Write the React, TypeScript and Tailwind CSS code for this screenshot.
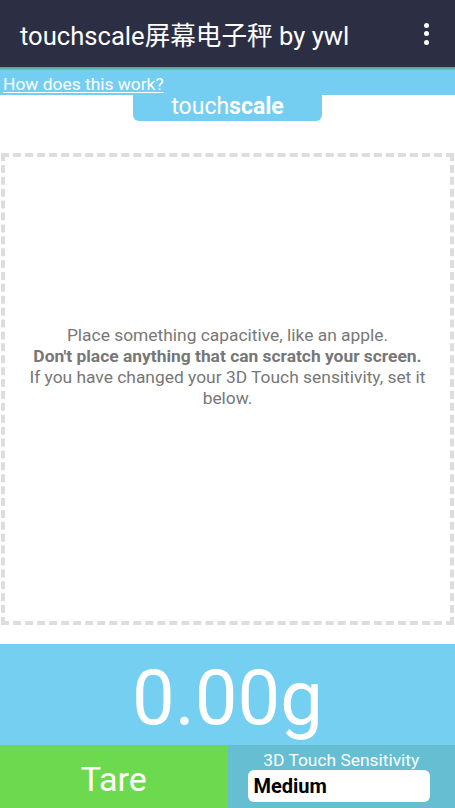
import React from 'react';

const font = { fontFamily: 'Roboto, "Noto Sans CJK SC", sans-serif' };

export default function App() {
  return (
    <div className="w-[455px] h-[808px] flex flex-col bg-white overflow-hidden" style={font}>
      {/* App bar */}
      <div className="h-[67px] shrink-0 bg-[#2c2e43] flex items-center pl-5 pr-[26px] pt-[6px]">
        <span className="text-white text-[25.6px] leading-none flex-1">touchscale屏幕电子秤 by ywl</span>
        <div className="flex flex-col gap-[3.5px] -mt-[6px]">
          <span className="w-[5px] h-[5px] rounded-full bg-white" />
          <span className="w-[5px] h-[5px] rounded-full bg-white" />
          <span className="w-[5px] h-[5px] rounded-full bg-white" />
        </div>
      </div>
      <div className="h-[3px] shrink-0 bg-gradient-to-b from-[#5a9a8e] to-[#72bfbf]" />

      {/* Help link strip */}
      <div className="h-[25px] shrink-0 bg-[#74cef1] flex items-end pl-[3px]">
        <a className="text-white text-[17.4px] leading-[21px] underline underline-offset-2">How does this work?</a>
      </div>
      <div className="flex justify-center">
        <div className="w-[189px] h-[26px] bg-[#74cef1] rounded-b-md text-white text-[23px] leading-[24px] text-center">
          touch<span className="font-bold">scale</span>
        </div>
      </div>

      {/* Drop zone */}
      <div className="mx-[1px] mt-[32px] h-[472px] border-4 border-dashed border-[#dddddd] flex items-center justify-center px-3">
        <p className="text-[#777777] text-[17.4px] leading-[21px] text-center -mt-[44px]">
          Place something capacitive, like an apple.
          <br />
          <span className="font-bold">Don't place anything that can scratch your screen.</span>
          <br />
          If you have changed your 3D Touch sensitivity, set it below.
        </p>
      </div>

      {/* Weight readout */}
      <div className="mt-[19px] h-[101px] shrink-0 bg-[#75cff1] flex items-center justify-center">
        <span className="text-white text-[76px] leading-none mt-[6px]">0.00g</span>
      </div>

      {/* Controls */}
      <div className="flex-1 grid grid-cols-2">
        <div className="bg-[#6cd94f] flex items-center justify-center pt-[4px]">
          <span className="text-white text-[34px] leading-none">Tare</span>
        </div>
        <div className="bg-[#66bed3] flex flex-col pt-[6px]">
          <span className="text-white text-[17.4px] leading-[18px] text-center">3D Touch Sensitivity</span>
          <div className="mt-[1px] ml-[20px] w-[182px] h-[32px] bg-white rounded-[6px] flex items-center px-[6px]">
            <span className="text-black font-bold text-[20px] leading-none">Medium</span>
          </div>
        </div>
      </div>
    </div>
  );
}
